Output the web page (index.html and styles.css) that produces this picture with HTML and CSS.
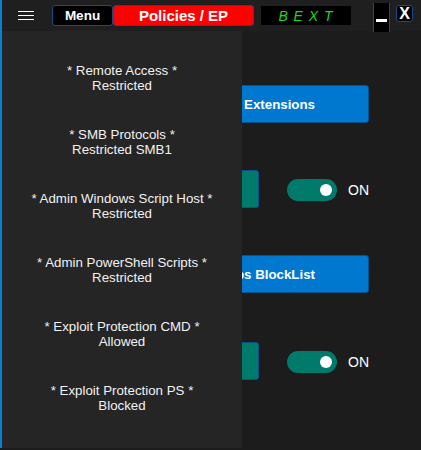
FILE: index.html
```html
<!DOCTYPE html>
<html>
<head>
<meta charset="utf-8">
<link rel="stylesheet" href="styles.css">
</head>
<body>
<div class="app">
  <header class="topbar">
    <div class="hamburger"><span></span><span></span><span></span></div>
    <div class="tabs">
      <div class="tab tab-menu">Menu</div>
      <div class="tab tab-active">Policies / EP</div>
    </div>
    <div class="brand">B E X T</div>
    <div class="win-min"><span></span></div>
    <div class="win-close">X</div>
  </header>
  <main class="content">
    <div class="action-btn">Manage Blocked File Extensions</div>
    <div class="toggle-row">
      <div class="teal-box"></div>
      <div class="switch"><span class="knob"></span></div>
      <span class="switch-label">ON</span>
    </div>
    <div class="action-btn row-third">Manage Apps BlockList</div>
    <div class="toggle-row row-fourth">
      <div class="teal-box"></div>
      <div class="switch"><span class="knob"></span></div>
      <span class="switch-label">ON</span>
    </div>
  </main>
  <nav class="drawer">
    <div class="drawer-item"><span>* Remote Access *</span><span>Restricted</span></div>
    <div class="drawer-item"><span>* SMB Protocols *</span><span>Restricted SMB1</span></div>
    <div class="drawer-item"><span>* Admin Windows Script Host *</span><span>Restricted</span></div>
    <div class="drawer-item"><span>* Admin PowerShell Scripts *</span><span>Restricted</span></div>
    <div class="drawer-item"><span>* Exploit Protection CMD *</span><span>Allowed</span></div>
    <div class="drawer-item"><span>* Exploit Protection PS *</span><span>Blocked</span></div>
  </nav>
</div>
</body>
</html>
```

FILE: styles.css
```css
* { box-sizing: border-box; }
html, body {
  margin: 0;
  padding: 0;
  background: #1c1c1c;
}
body {
  width: 421px;
  height: 450px;
  overflow: hidden;
  font-family: "Liberation Sans", Arial, sans-serif;
  color: #f2f2f2;
}
.app {
  position: relative;
  width: 421px;
  height: 448px;
  background: #1c1c1c;
  border-left: 2px solid #0a7fd6;
}
.topbar {
  height: 31px;
  display: flex;
  align-items: center;
  background: #1f1f1f;
}
.hamburger {
  margin-left: 16px;
  width: 16px;
  display: flex;
  flex-direction: column;
  gap: 3px;
}
.hamburger span {
  display: block;
  height: 1px;
  background: #ffffff;
}
.tabs {
  display: flex;
  margin-left: 18px;
  height: 21px;
}
.tab {
  height: 21px;
  display: flex;
  align-items: center;
  justify-content: center;
  font-weight: bold;
  color: #ffffff;
  border: 1px solid #124d86;
  border-radius: 3px;
}
.tab-menu {
  width: 61px;
  background: #000000;
  font-size: 13.5px;
}
.tab-active {
  width: 141px;
  background: #ff0000;
  font-size: 15px;
}
.brand {
  margin-left: 7px;
  width: 90px;
  height: 19px;
  background: #000000;
  color: #1ed81e;
  font-style: italic;
  font-size: 14px;
  letter-spacing: 1px;
  display: flex;
  align-items: center;
  justify-content: center;
}
.win-min {
  margin-left: 22px;
  width: 17px;
  height: 29px;
  margin-top: 4px;
  background: #000000;
  border-left: 1px solid #124d86;
  border-right: 1px solid #124d86;
  display: flex;
  align-items: flex-start;
  justify-content: center;
  padding-top: 16px;
}
.win-min span {
  display: block;
  width: 11px;
  height: 3px;
  background: #ffffff;
}
.win-close {
  margin-left: 6px;
  margin-top: -4px;
  width: 17px;
  height: 17px;
  background: #000000;
  border: 1px solid #124d86;
  border-radius: 3px;
  color: #ffffff;
  font-weight: bold;
  font-size: 16px;
  display: flex;
  align-items: center;
  justify-content: center;
}
.content {
  display: flex;
  flex-direction: column;
  padding: 54px 0 0 40px;
}
.action-btn {
  width: 327px;
  height: 38px;
  background: #0078d0;
  border: 1px solid #0b4f8c;
  border-radius: 3px;
  color: #ffffff;
  font-weight: bold;
  font-size: 13.3px;
  display: flex;
  align-items: center;
  justify-content: flex-end;
  padding-right: 53px;
}
.toggle-row {
  display: flex;
  align-items: center;
  margin-top: 47px;
  height: 38px;
}
.row-third { margin-top: 47px; }
.row-fourth { margin-top: 49px; }
.teal-box {
  width: 217px;
  height: 38px;
  background: #007a6a;
  border: 1px solid #0b4f8c;
  border-radius: 3px;
}
.switch {
  margin-left: 28px;
  width: 50px;
  height: 22px;
  border-radius: 11px;
  background: #007a6a;
  display: flex;
  align-items: center;
  justify-content: flex-end;
  padding-right: 5px;
  margin-top: 1px;
}
.knob {
  display: block;
  width: 12px;
  height: 12px;
  border-radius: 50%;
  background: #ffffff;
}
.switch-label {
  margin-left: 11px;
  font-size: 14px;
  color: #ffffff;
  margin-top: 1px;
}
.drawer {
  position: absolute;
  left: 0;
  top: 31px;
  width: 240px;
  height: 417px;
  background: #252525;
  display: flex;
  flex-direction: column;
  gap: 34px;
  padding-top: 32px;
}
.drawer-item {
  display: flex;
  flex-direction: column;
  align-items: center;
  font-size: 13.3px;
  line-height: 15px;
  color: #f2f2f2;
}
```
